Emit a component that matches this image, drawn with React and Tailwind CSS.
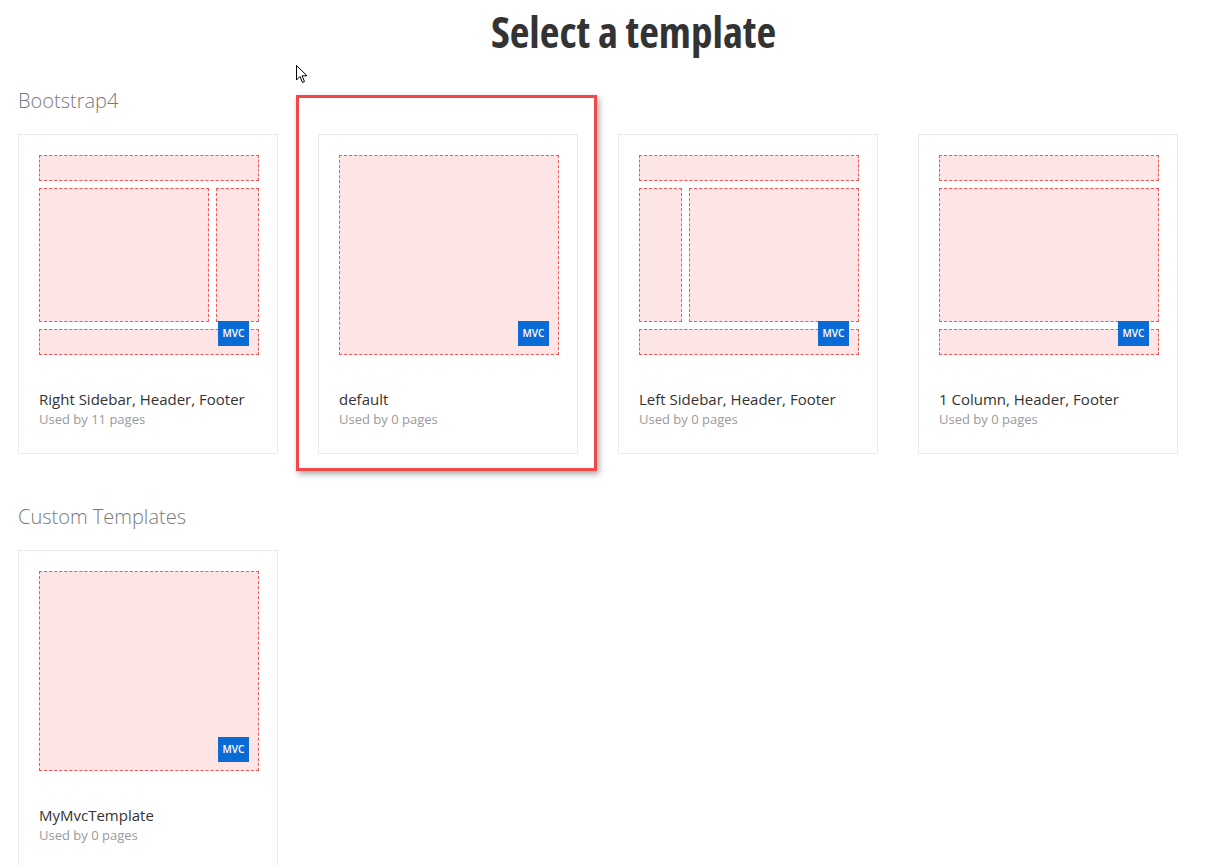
import React from "react";

const templates = [
  { name: "Right Sidebar, Header, Footer", used: 11, layout: "right" },
  { name: "default", used: 0, layout: "single" },
  { name: "Left Sidebar, Header, Footer", used: 0, layout: "left" },
  { name: "1 Column, Header, Footer", used: 0, layout: "column" },
];

const box = "border border-dashed border-[#f55656] bg-[#fde5e5]";

const Preview = ({ layout }) => {
  return (
    <div className="relative h-[200px] w-[220px]">
      {layout === "single" ? (
        <div className={`${box} h-full`} />
      ) : (
        <div className="flex h-full flex-col gap-[7px]">
          <div className={`${box} h-[26px]`} />
          <div className="flex flex-1 gap-[7px]">
            {layout === "left" && <div className={`${box} w-[43px]`} />}
            <div className={`${box} flex-1`} />
            {layout === "right" && <div className={`${box} w-[43px]`} />}
          </div>
          <div className={`${box} h-[26px]`} />
        </div>
      )}
      {/* MVC badge */}
      <div className="absolute bottom-[9px] right-[10px] flex h-[25px] w-[31px] items-center justify-center bg-[#0a6ad6] text-[10px] font-semibold text-white">
        MVC
      </div>
    </div>
  );
};

const Card = ({ t }) => (
  <div className="w-[260px] border border-[#ebebeb] bg-white px-5 pb-6 pt-5">
    <Preview layout={t.layout} />
    <div className="mt-[34px] text-[15px] leading-5 text-[#333]">{t.name}</div>
    <div className="text-[13px] leading-5 text-[#9a9a9a]">Used by {t.used} pages</div>
  </div>
);

export default function App() {
  return (
    <div
      className="relative h-[866px] overflow-hidden bg-white px-[18px]"
      style={{ fontFamily: '"Open Sans", "Noto Sans", sans-serif' }}
    >
      <h1 className="pl-[50px] pt-2 text-center text-[43px] font-bold leading-[48px] text-[#333] [font-stretch:75%]">
        Select a template
      </h1>

      <h2 className="mt-[31px] mb-[19px] text-[20px] font-light leading-7 text-[#7a7a7a]">
        Bootstrap4
      </h2>
      <div className="flex gap-10">
        {templates.map((t) => (
          <Card key={t.name} t={t} />
        ))}
      </div>

      <h2 className="mt-[49px] mb-[19px] text-[20px] font-light leading-7 text-[#7a7a7a]">
        Custom Templates
      </h2>
      <div className="flex gap-10">
        <Card t={{ name: "MyMvcTemplate", used: 0, layout: "single" }} />
      </div>

      {/* highlight annotation */}
      <div className="pointer-events-none absolute left-[296px] top-[95px] h-[376px] w-[301px] border-[3px] border-[#f44747] shadow-[2px_3px_6px_rgba(0,0,0,0.35)]" />

      {/* mouse cursor */}
      <svg className="absolute left-[295px] top-[64px]" width="14" height="21" viewBox="0 0 14 21">
        <path
          d="M1.5 1.5 L1.5 16 L5 12.5 L7.5 18.5 L9.5 17.6 L7 11.8 L12 11.8 Z"
          fill="white"
          stroke="black"
          strokeWidth="1"
          strokeLinejoin="miter"
        />
      </svg>
    </div>
  );
}
